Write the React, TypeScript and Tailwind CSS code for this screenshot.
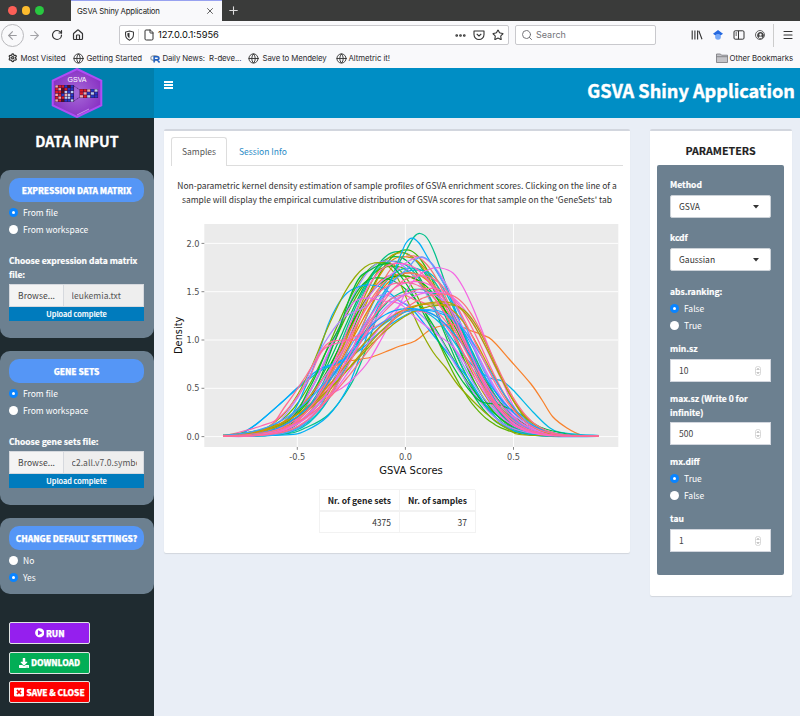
import React from "react";
import {
  ArrowLeft,
  ArrowRight,
  RotateCw,
  House,
  File,
  Search,
  Star,
  Ellipsis,
  Globe,
  Settings,
  Menu,
  X,
  Plus,
} from "lucide-react";
import { FaPlayCircle, FaDownload, FaWindowClose, FaUserCircle } from "react-icons/fa";

type Pt = [number, number];

/* ---------- density plot ---------- */

const PX = (v: number) => 405.4 + v * 216.2;
const PY = (d: number) => 436.6 - d * 96.6;

// Curves with an individual shape, as plot coordinates.
const traced: { c: string; p: Pt[] }[] = [
  { c: "#F8812B", p: [[223, 436.5], [250, 434], [275, 427], [295, 412], [310, 396], [325, 376], [338, 364], [352, 360.5], [370, 357.5], [385, 352], [400, 346], [415, 341], [430, 330], [445, 325], [457, 325], [469, 330], [480, 334], [492, 340], [510, 360], [531, 384], [542, 400], [553, 417], [567, 428], [580, 434.5], [599, 436.4]] },
  { c: "#00B8E5", p: [[223, 436.4], [240, 433.5], [255, 425], [280, 404], [297, 389], [320, 371], [340, 362], [360, 348], [380, 327], [395, 317], [408, 311], [420, 310], [440, 323], [460, 350], [475, 368], [490, 378], [502, 381], [513, 390], [533, 412], [550, 428], [565, 433], [599, 435.6]] },
  { c: "#00A9FF", p: [[223, 436.4], [241, 434], [258, 423], [282, 402], [297, 388], [318, 370], [338, 362], [360, 350], [380, 332], [397, 320], [415, 311], [432, 311], [450, 318], [465, 334], [480, 360], [495, 390], [515, 418], [540, 433], [599, 436.5]] },
  { c: "#00A9FF", p: [[223, 436.4], [265, 434], [290, 417], [305, 388], [317, 358], [328, 325], [337, 306], [347, 293], [358, 287], [369, 285], [383, 288], [398, 300], [412, 309], [430, 331], [450, 356], [470, 381], [490, 411], [510, 429], [540, 436], [599, 436.5]] },
  { c: "#93AA00", p: [[223, 436.4], [258, 432], [282, 416], [298, 394], [312, 366], [325, 334], [335, 312], [345, 292], [355, 277], [365, 267], [374, 263], [385, 264], [397, 277], [408, 302], [420, 329], [433, 352], [446, 368], [458, 385], [477, 405], [493, 419], [510, 430], [525, 435], [599, 436.5]] },
  { c: "#00C08B", p: [[223, 436.5], [285, 434], [305, 428], [328, 415], [350, 386], [365, 352], [380, 307], [394, 273], [407, 249], [414, 237], [420, 233.5], [427, 238], [435, 254], [447, 288], [459, 320], [475, 367], [490, 398], [510, 423], [540, 434], [599, 436.5]] },
  { c: "#00B0F6", p: [[223, 436.5], [285, 435], [305, 431], [328, 416], [347, 389], [360, 356], [374, 316], [388, 288], [399, 259], [406, 243], [412, 238], [419, 243], [428, 258], [445, 286], [460, 322], [480, 372], [500, 407], [520, 426], [550, 434], [599, 436.5]] },
  { c: "#F564E3", p: [[223, 436.5], [265, 433], [298, 416], [322, 399], [342, 388], [354, 378], [368, 362], [382, 338], [395, 314], [407, 290], [418, 276], [430, 269], [441, 268], [453, 273], [463, 287], [473, 308], [487, 343], [500, 375], [513, 405], [527, 423], [550, 434], [599, 436.4]] },
  { c: "#AE87FF", p: [[223, 436.4], [265, 433], [295, 402], [312, 367], [325, 342], [342, 319], [354, 312], [365, 307], [376, 297], [386, 295], [398, 300], [414, 309], [435, 330], [460, 372], [490, 413], [525, 432], [599, 436.5]] },
  { c: "#E76BF3", p: [[223, 436.4], [278, 429], [306, 398], [327, 355], [341, 323], [354, 302], [368, 298], [383, 301], [400, 304], [417, 319], [435, 333], [455, 349], [480, 386], [505, 420], [540, 434], [599, 436.4]] },
  { c: "#DB72FB", p: [[223, 436.5], [280, 431], [302, 413], [323, 379], [344, 348], [361, 309], [378, 285], [393, 273], [407, 262], [419, 257], [430, 262], [446, 284], [461, 315], [479, 357], [500, 398], [525, 426], [560, 435], [599, 436.4]] },
  { c: "#619CFF", p: [[223, 436.4], [285, 433], [315, 413], [334, 378], [350, 347], [374, 310], [391, 284], [407, 269], [415, 260], [423, 257], [433, 265], [445, 286], [465, 325], [480, 363], [500, 399], [520, 424], [560, 434], [599, 436.4]] },
  { c: "#00BA38", p: [[223, 436.4], [285, 423], [310, 387], [327, 350], [340, 326], [350, 297], [360, 277], [372, 269], [380, 265], [391, 265], [405, 282], [421, 309], [443, 349], [463, 382], [480, 401], [500, 405], [520, 414], [540, 427], [570, 434.5], [599, 436.4]] },
  { c: "#FF64B0", p: [[223, 436.4], [261, 426], [281, 416], [306, 384], [323, 350], [345, 341], [365, 332], [383, 322], [401, 311], [423, 312], [440, 319], [460, 347], [480, 383], [500, 411], [530, 431], [599, 436.5]] },
  { c: "#FF6C91", p: [[223, 436.4], [265, 430], [286, 405], [306, 376], [326, 345], [343, 340], [357, 339], [372, 318], [388, 301], [403, 295], [415, 300], [430, 306], [447, 323], [465, 356], [490, 397], [517, 427], [550, 434], [599, 436.5]] },
];

// Bell-shaped curves: colour, mode, height, left spread, right spread, tail power.
const bells: [string, number, number, number, number, number][] = [
  ["#00BF7D", -0.035, 1.91, 0.215, 0.235, 2.2],
  ["#00BC59", -0.045, 1.86, 0.235, 0.215, 2.1],
  ["#39B600", 0.005, 1.93, 0.235, 0.2, 2.0],
  ["#B79F00", -0.02, 1.9, 0.225, 0.23, 2.1],
  ["#D39200", -0.01, 1.86, 0.215, 0.25, 2.2],
  ["#53B400", -0.06, 1.76, 0.25, 0.25, 2.3],
  ["#5EB300", -0.1, 1.8, 0.225, 0.23, 2.1],
  ["#00C19F", -0.055, 1.81, 0.22, 0.24, 2.2],
  ["#00BFC4", 0.025, 1.74, 0.24, 0.23, 2.4],
  ["#00BDD0", 0.055, 1.72, 0.26, 0.22, 2.4],
  ["#9590FF", -0.085, 1.815, 0.225, 0.27, 2.2],
  ["#F8766D", 0.025, 1.87, 0.225, 0.22, 2.1],
  ["#E58700", 0.02, 1.69, 0.26, 0.235, 2.2],
  ["#E88526", -0.04, 1.67, 0.235, 0.29, 2.3],
  ["#F8766D", 0.01, 1.69, 0.26, 0.265, 2.4],
  ["#00BA38", -0.13, 1.64, 0.195, 0.3, 2.3],
  ["#0CB702", -0.02, 1.66, 0.265, 0.28, 2.3],
  ["#00C094", 0.06, 1.52, 0.29, 0.24, 2.4],
  ["#FF61C3", -0.035, 1.79, 0.235, 0.28, 2.3],
  ["#FF67A4", 0.12, 1.53, 0.34, 0.23, 2.4],
  ["#ED68ED", 0.14, 1.49, 0.33, 0.235, 2.4],
  ["#C77CFF", 0.07, 1.49, 0.3, 0.25, 2.4],
  ["#B79F00", 0.17, 1.39, 0.38, 0.22, 2.4],
  ["#A3A500", 0.2, 1.36, 0.41, 0.2, 2.4],
  ["#CD9600", 0.13, 1.37, 0.37, 0.23, 2.4],
  ["#35A2FF", 0.1, 1.31, 0.38, 0.26, 2.5],
  ["#00A5FF", 0.02, 1.32, 0.3, 0.29, 2.4],
  ["#FD61D1", 0.05, 1.6, 0.28, 0.23, 2.4],
  ["#FF68A1", -0.01, 1.59, 0.26, 0.27, 2.4],
  ["#FC717F", 0.18, 1.47, 0.35, 0.21, 2.3],
  ["#FF6A98", 0.07, 1.66, 0.27, 0.245, 2.3],
];

function smooth(p: Pt[]): string {
  let d = `M${p[0][0]} ${p[0][1]}`;
  for (let i = 0; i < p.length - 1; i++) {
    const a = p[Math.max(0, i - 1)];
    const b = p[i];
    const c = p[i + 1];
    const e = p[Math.min(p.length - 1, i + 2)];
    d += `C${(b[0] + (c[0] - a[0]) / 6).toFixed(1)} ${(b[1] + (c[1] - a[1]) / 6).toFixed(1)} ${(c[0] - (e[0] - b[0]) / 6).toFixed(1)} ${(c[1] - (e[1] - b[1]) / 6).toFixed(1)} ${c[0]} ${c[1]}`;
  }
  return d;
}

function bell([, m, h, l, r, k]: (typeof bells)[number]): string {
  const p: Pt[] = [];
  for (let x = 223; x <= 599; x += 4) {
    const v = (x - 405.4) / 216.2;
    const t = Math.abs(v - m) / (v < m ? l : r);
    p.push([x, +PY(h * Math.exp(-0.5 * Math.pow(t, k)) + 0.004).toFixed(2)]);
  }
  return smooth(p);
}

function DensityPlot() {
  return (
    <svg viewBox="171 218 452 262" className="block h-[262px] w-[452px]">
      <rect x="204.3" y="224" width="414" height="223" fill="#EBEBEB" />
      {[0, 0.5, 1, 1.5, 2].map((v) => (
        <g key={v}>
          <line x1="204.3" x2="618.3" y1={PY(v)} y2={PY(v)} stroke="#fff" strokeWidth="0.9" />
          <line x1="201.5" x2="204.3" y1={PY(v)} y2={PY(v)} stroke="#555" strokeWidth="0.7" />
          <text x="199.6" y={PY(v) + 3.1} textAnchor="end" fontSize="8.2" fill="#4d4d4d" fontFamily="DejaVu Sans">
            {v.toFixed(1)}
          </text>
        </g>
      ))}
      {[-0.5, 0, 0.5].map((v) => (
        <g key={v}>
          <line y1="224" y2="447" x1={PX(v)} x2={PX(v)} stroke="#fff" strokeWidth="0.9" />
          <line y1="447" y2="449.8" x1={PX(v)} x2={PX(v)} stroke="#555" strokeWidth="0.7" />
          <text x={PX(v)} y="459.5" textAnchor="middle" fontSize="8.2" fill="#4d4d4d" fontFamily="DejaVu Sans">
            {v.toFixed(1)}
          </text>
        </g>
      ))}
      <g fill="none" strokeWidth="1.25" strokeLinejoin="round">
        {bells.slice(0, 18).map((b, i) => (
          <path key={i} d={bell(b)} stroke={b[0]} />
        ))}
        {traced.map((t, i) => (
          <path key={i} d={smooth(t.p)} stroke={t.c} />
        ))}
        {bells.slice(18).map((b, i) => (
          <path key={i} d={bell(b)} stroke={b[0]} />
        ))}
      </g>
      <text x="411" y="473.6" textAnchor="middle" fontSize="10" fill="#111" fontFamily="DejaVu Sans">
        GSVA Scores
      </text>
      <text transform="translate(182 335.3) rotate(-90)" textAnchor="middle" fontSize="9.8" fill="#111" fontFamily="DejaVu Sans">
        Density
      </text>
    </svg>
  );
}

/* ---------- logo ---------- */

const R = "#e01b24";
const B = "#2438c8";
const L = "#b9cdf0";
const P = "#f3a9a9";
const K = "#5a1020";
const leftCells = [
  [P, R, R, B, K, B],
  [R, P, K, R, B, B],
  [R, R, K, L, B, L],
  [P, R, B, P, L, B],
  [R, P, R, L, L, B],
  [P, R, K, B, B, L],
];
const rightCells = [
  [R, R, P, B, L],
  [R, P, B, L, B],
  [P, R, L, B, B],
];

function Logo() {
  return (
    <svg viewBox="0 0 52 50" className="h-[50px] w-[52px]">
      <defs>
        <radialGradient id="hex">
          <stop offset="0" stopColor="#a668d8" />
          <stop offset="1" stopColor="#8a35c4" />
        </radialGradient>
      </defs>
      <path d="M26 1L50.3 12.6V37.4L26 49L1.7 37.4V12.6Z" fill="url(#hex)" stroke="#b04df5" strokeWidth="2" />
      <text x="26" y="13.9" textAnchor="middle" fontSize="7" fill="#fff" fontFamily="Liberation Sans">
        GSVA
      </text>
      <rect x="4" y="17" width="19" height="17" fill="#33104c" />
      {leftCells.map((r, i) => r.map((c, j) => <rect key={`${i}-${j}`} x={4.3 + j * 3.1} y={17.3 + i * 2.8} width="2.6" height="2.3" fill={c} />))}
      <path d="M23 18L29 22M23 33L29 29" stroke="#33104c" strokeWidth="0.6" strokeDasharray="1.2 .6" />
      <rect x="28.6" y="21" width="18.5" height="9" fill="#33104c" />
      {rightCells.map((r, i) => r.map((c, j) => <rect key={`${i}-${j}`} x={28.9 + j * 3.65} y={21.3 + i * 2.95} width="3.1" height="2.4" fill={c} />))}
      <path d="M26 47L38 41" stroke="#cf9cf2" strokeWidth="0.9" />
    </svg>
  );
}

/* ---------- browser ---------- */

const bm = "text-[7.8px] leading-[10px] text-[#2b2b2f] whitespace-nowrap";

function Browser() {
  return (
    <div className="h-[68px] bg-[#f9f9fb] font-['Inter',sans-serif]">
      <div className="flex h-[21px] bg-[#3a3b3a]">
        <div className="flex w-[71px] items-center gap-[5px] pl-2">
          <i className="size-[8.5px] rounded-full bg-[#fc5f57]" />
          <i className="size-[8.5px] rounded-full bg-[#fdbc2e]" />
          <i className="size-[8.5px] rounded-full bg-[#28c840]" />
        </div>
        <div className="flex w-[151px] items-center justify-between border-t border-[#98a2f0] bg-[#f9f9fb] pl-1.5 pr-[7px]">
          <span className="text-[7.8px] leading-[12px] tracking-[-0.2px] text-[#1c1c22]">GSVA Shiny Application</span>
          <X className="size-[10px] text-[#444]" strokeWidth={2} />
        </div>
        <div className="flex items-center pl-[5px]">
          <Plus className="size-[13px] text-[#ddd]" strokeWidth={2} />
        </div>
      </div>
      <div className="flex h-[28px] items-center">
        <div className="flex w-[119px] items-center">
          <span className="ml-[1px] flex size-[23px] items-center justify-center rounded-full border border-[#b9b9bd]">
            <ArrowLeft className="size-[13px] text-[#9a9a9e]" />
          </span>
          <ArrowRight className="ml-[4px] size-[13px] text-[#a5a5a9]" />
          <RotateCw className="ml-[10px] size-[12px] text-[#333]" strokeWidth={2.4} />
          <House className="ml-[9px] size-[12px] text-[#333]" strokeWidth={2.4} />
        </div>
        <div className="flex h-[20px] w-[390px] items-center rounded-[2px] border border-[#c9c9cd] bg-white pl-[4px] pr-[4px]">
          <svg viewBox="0 0 12 12" className="size-[11px]" fill="none" stroke="#333" strokeWidth="1.1">
            <path d="M6 1L10.3 2.2V5C10.3 8.4 8.4 10.2 6 11.1C3.6 10.2 1.7 8.4 1.7 5V2.2Z" />
            <path d="M6 3V9C4.500 8.300 3.700 7 3.700 5V3.600Z" fill="#333" stroke="none" />
          </svg>
          <span className="ml-[3px] h-[13px] w-px bg-[#ddd]" />
          <File className="ml-[4px] size-[12px] text-[#333]" strokeWidth={2} />
          <span className="ml-[3px] flex-1 text-[9.3px] leading-[12px] text-[#0c0c0d]">127.0.0.1:5956</span>
          <Ellipsis className="size-[13px] text-[#333]" strokeWidth={3} />
          <svg viewBox="0 0 12 12" className="ml-[6px] size-[12px]" fill="none" stroke="#333" strokeWidth="1.1" strokeLinejoin="round">
            <path d="M1 2H11V5.500A5 5 0 0 1 1 5.500Z" />
            <path d="M3.700 4.800L6 7L8.300 4.800" />
          </svg>
          <Star className="ml-[7px] size-[12px] text-[#333]" strokeWidth={2.2} />
        </div>
        <div className="ml-[6px] flex h-[20px] w-[141px] items-center rounded-[2px] border border-[#c9c9cd] bg-white pl-[5px]">
          <Search className="size-[12px] text-[#707074]" strokeWidth={1.9} />
          <span className="ml-[3px] text-[9px] leading-[12px] text-[#737378]">Search</span>
        </div>
        <div className="ml-[35px] flex items-center">
          <svg viewBox="0 0 12 12" className="size-[12px]" fill="none" stroke="#333" strokeWidth="1.1">
            <path d="M1.200 1.500V10.500M3.900 1.500V10.500M6.600 1.500V10.500M7.800 1.800L11 10.300" />
          </svg>
          <svg viewBox="0 0 12 12" className="ml-[9px] size-[12px]">
            <circle cx="6" cy="7.800" r="2.900" fill="#76a9f8" />
            <path d="M6 1L11 4.800L8.600 6.600A3 3 0 0 0 3.400 6.600L1 4.800Z" fill="#2569e0" />
          </svg>
          <svg viewBox="0 0 12 12" className="ml-[9px] size-[12px]" fill="none" stroke="#333" strokeWidth="1">
            <rect x="1" y="1.800" width="10" height="8.400" rx="1.200" />
            <path d="M5.500 1.800V10.200M2.500 4H4M2.500 6H4" />
          </svg>
          <span className="ml-[10px] flex size-[10px] items-center justify-center rounded-full border border-[#666]">
            <FaUserCircle className="size-[7px] text-[#444]" />
          </span>
          <span className="ml-[8px] h-[23px] w-px bg-[#ccc]" />
          <Menu className="ml-[8px] size-[12px] text-[#333]" strokeWidth={2.2} />
        </div>
      </div>
      <div className="flex h-[18px] items-center">
        <Settings className="ml-[8px] size-[9.5px] text-[#333]" strokeWidth={3} />
        <span className={`${bm} ml-[3px] w-[49px] tracking-[-0.05px]`}>Most Visited</span>
        <Globe className="ml-[3px] size-[11px] text-[#333]" strokeWidth={2} />
        <span className={`${bm} ml-[3px] w-[60px]`}>Getting Started</span>
        <svg viewBox="0 0 12 10" className="ml-[3px] h-[9px] w-[11px]">
          <ellipse cx="5" cy="4.500" rx="4.200" ry="2.800" fill="none" stroke="#9aa0a8" strokeWidth="1.4" />
          <path d="M4.500 9.500V3H8.200A1.700 1.700 0 0 1 8.200 6.400H5M8 6.600L10.500 9.500" fill="none" stroke="#1f5fc0" strokeWidth="1.7" />
        </svg>
        <span className={`${bm} ml-[2px] w-[77px] tracking-[-0.1px]`}>Daily News:&nbsp; R-deve...</span>
        <Globe className="ml-[8px] size-[11px] text-[#333]" strokeWidth={2} />
        <span className={`${bm} ml-[4px] w-[65px] tracking-[-0.1px]`}>Save to Mendeley</span>
        <Globe className="ml-[8px] size-[11px] text-[#333]" strokeWidth={2} />
        <span className={`${bm} ml-[2px] tracking-[-0.05px]`}>Altmetric it!</span>
        <svg viewBox="0 0 12 10" className="ml-auto h-[10px] w-[12px]" fill="#c4c4c8" stroke="#77777b" strokeWidth=".8">
          <path d="M.5 9.500V1H4.500L5.500 2.200H11.500V9.500Z" />
          <path d="M.5 3.700H11.500" />
        </svg>
        <span className={`${bm} ml-[2px] mr-[7px] tracking-[-0.05px]`}>Other Bookmarks</span>
      </div>
    </div>
  );
}

/* ---------- form pieces ---------- */

function Radio({ on, label }: { on?: boolean; label: string }) {
  return (
    <div className="flex h-[17px] items-center gap-[5px] text-[8.5px] leading-[13px] text-white">
      <span className={`flex size-[9px] items-center justify-center rounded-full ${on ? "bg-[#0a84ff]" : "bg-white"}`}>
        {on && <i className="size-[3px] rounded-full bg-white" />}
      </span>
      {label}
    </div>
  );
}

function Pill({ children }: { children: string }) {
  return (
    <div className="flex h-[24px] items-center justify-center whitespace-nowrap rounded-[10px] bg-[#5596f6] text-[8.4px] font-black leading-[13px] tracking-[-0.07px] text-white [-webkit-text-stroke:0.25px_white]">
      {children}
    </div>
  );
}

function FileInput({ name }: { name: string }) {
  return (
    <>
      <div className="flex h-[23px] border border-[#d6d9de] bg-[#eee] text-[8.5px] leading-[21px] text-[#444]">
        <span className="w-[54px] border-r border-[#d6d9de] bg-[#f4f4f4] pl-[8px] tracking-[0.06px]">Browse...</span>
        <input readOnly value={name} className="ml-[7.500px] h-[21px] w-[65px] bg-transparent p-0 tracking-[0.06px] text-[#555] outline-none" />
      </div>
      <div className="h-[14px] bg-[#007bbd] text-center text-[7.4px] font-medium leading-[13px] text-white [-webkit-text-stroke:0.15px_white]">
        Upload complete
      </div>
    </>
  );
}

function Action({ color, icon, label }: { color: string; icon: React.ReactNode; label: string }) {
  return (
    <div className={`flex h-[22px] w-[81px] items-center justify-center gap-[2px] rounded-[2px] border border-[#dfe4e2] text-[8.4px] font-black leading-[13px] tracking-[-0.08px] text-white [-webkit-text-stroke:0.25px_white] ${color}`}>
      {icon}
      {label}
    </div>
  );
}

const block = "rounded-[10px] bg-[#6c8090] px-[9px] pt-[8px] pr-[10px]";
const lbl = "text-[8.5px] font-bold leading-[13.5px] text-white [-webkit-text-stroke:0.2px_white]";

function Sidebar() {
  return (
    <aside className="h-[598px] w-[154px] bg-[#1f2b30]">
      <h2 className="h-[52px] pt-[10px] text-center text-[14.3px] font-bold leading-[26px] text-white [-webkit-text-stroke:0.3px_white]">DATA INPUT</h2>
      <div className={`${block} h-[168px]`}>
        <Pill>EXPRESSION DATA MATRIX</Pill>
        <div className="pt-[2px]">
          <Radio on label="From file" />
          <Radio label="From workspace" />
        </div>
        <div className={`${lbl} mt-[16px] h-[30px]`}>
          Choose expression data matrix
          <br />
          file:
        </div>
        <FileInput name="leukemia.txt" />
      </div>
      <div className={`${block} mt-[13px] h-[154px]`}>
        <Pill>GENE SETS</Pill>
        <div className="pt-[2px]">
          <Radio on label="From file" />
          <Radio label="From workspace" />
        </div>
        <div className={`${lbl} mt-[16px] h-[16px]`}>Choose gene sets file:</div>
        <FileInput name="c2.all.v7.0.symbols.gmt" />
      </div>
      <div className={`${block} mt-[13px] h-[76px]`}>
        <Pill>CHANGE DEFAULT SETTINGS?</Pill>
        <div className="pt-[2px]">
          <Radio label="No" />
          <Radio on label="Yes" />
        </div>
      </div>
      <div className="flex flex-col gap-[7.5px] pl-[9px] pt-[28px]">
        <Action color="bg-[#951fee]" icon={<FaPlayCircle className="size-[9.5px]" />} label="RUN" />
        <Action color="bg-[#02ae56]" icon={<FaDownload className="size-[10px]" />} label="DOWNLOAD" />
        <Action color="bg-[#fe0000]" icon={<FaWindowClose className="size-[10px]" />} label="SAVE & CLOSE" />
      </div>
    </aside>
  );
}

function Select({ value }: { value: string }) {
  return (
    <div className="flex h-[23px] items-center justify-between rounded-[2px] border border-[#ccd2d8] bg-white pl-[8px] pr-[11px] text-[8.5px] leading-[13px] text-[#333]">
      {value}
      <svg viewBox="0 0 6 4" className="h-[4px] w-[6px]">
        <path d="M0 0H6L3 3.600Z" fill="#333" />
      </svg>
    </div>
  );
}

function NumberInput({ value }: { value: string }) {
  return (
    <div className="flex h-[23px] items-center justify-between border border-[#d2d6de] bg-white pl-[8px] pr-[9px] text-[8.5px] leading-[13px] text-[#444]">
      {value}
      <svg viewBox="0 0 6 10" className="h-[10px] w-[6px]" fill="none">
        <rect x=".5" y=".5" width="5" height="9" rx="2" stroke="#cfcfcf" strokeWidth=".8" />
        <path d="M2 3.700L3 2.600L4 3.700M2 6.300L3 7.400L4 6.300" stroke="#666" strokeWidth=".8" />
      </svg>
    </div>
  );
}

function Parameters() {
  return (
    <section className="h-[467px] w-[142px] rounded-[2px] border-t-2 border-[#d2d6de] bg-white pl-[7px] pr-[8px] shadow-[0_1px_1px_rgba(0,0,0,0.1)]">
      <h3 className="h-[34px] pt-[12px] text-center text-[10.7px] font-bold leading-[16px] text-[#222] [-webkit-text-stroke:0.15px_#222]">PARAMETERS</h3>
      <div className="h-[410px] rounded-[2px] bg-[#6c8090] px-[13px] pt-[13px]">
        <div className={`${lbl} h-[17px]`}>Method</div>
        <Select value="GSVA" />
        <div className={`${lbl} mt-[13px] h-[17px]`}>kcdf</div>
        <Select value="Gaussian" />
        <div className={`${lbl} mt-[14px] h-[15px]`}>abs.ranking:</div>
        <Radio on label="False" />
        <Radio label="True" />
        <div className={`${lbl} mt-[8px] h-[17px]`}>min.sz</div>
        <NumberInput value="10" />
        <div className={`${lbl} mt-[10px] h-[30px]`}>
          max.sz (Write 0 for
          <br />
          infinite)
        </div>
        <NumberInput value="500" />
        <div className={`${lbl} mt-[10px] h-[15px]`}>mx.diff</div>
        <Radio on label="True" />
        <Radio label="False" />
        <div className={`${lbl} mt-[8px] h-[17px]`}>tau</div>
        <NumberInput value="1" />
      </div>
    </section>
  );
}

function SamplesBox() {
  return (
    <section className="h-[424px] w-[466px] rounded-[2px] border-t-2 border-[#d2d6de] bg-white px-[7px] pt-[6px] shadow-[0_1px_1px_rgba(0,0,0,0.1)]">
      <div className="flex h-[29px] text-[8.5px] leading-[28px]">
        <span className="w-[56px] rounded-t-[3px] border border-b-0 border-[#ddd] text-center leading-[27px] text-[#555]">Samples</span>
        <span className="flex-1 border-b border-[#ddd] pl-[12px] text-[#2a8bc6]">Session Info</span>
      </div>
      <p className="h-[52px] whitespace-nowrap pt-[13px] text-center text-[8.47px] leading-[13.5px] text-[#333]">
        Non-parametric kernel density estimation of sample profiles of GSVA enrichment scores. Clicking on the line of a
        <br />
        sample will display the empirical cumulative distribution of GSVA scores for that sample on the 'GeneSets' tab
      </p>
      <DensityPlot />
      <div className="ml-[148px] mt-[9px] grid w-[156px] grid-cols-[80px_76px] border-l border-t border-[#f2f2f2] text-right text-[8.5px] leading-[21px] text-[#333]">
        <b className="h-[22px] border-b-2 border-r border-[#f2f2f2] pr-[8px] text-[#222]">Nr. of gene sets</b>
        <b className="h-[22px] border-b-2 border-r border-[#f2f2f2] pr-[8px] text-[#222]">Nr. of samples</b>
        <span className="h-[21px] border-b border-r border-[#f2f2f2] pr-[8px]">4375</span>
        <span className="h-[21px] border-b border-r border-[#f2f2f2] pr-[8px]">37</span>
      </div>
    </section>
  );
}

export default function App() {
  return (
    <div className="h-[716px] w-[800px] overflow-hidden bg-[#e9eef6] font-['Noto_Sans_CJK_SC',sans-serif]">
      <Browser />
      <header className="flex h-[50px] text-white">
        <div className="flex w-[154px] justify-center bg-[#007fad]">
          <Logo />
        </div>
        <div className="flex flex-1 justify-between bg-[#008ec5] pl-[10px] pr-[5px]">
          <div className="mt-[13px] flex flex-col gap-[1.5px]">
            <i className="h-[1.5px] w-[9px] bg-white" />
            <i className="h-[1.5px] w-[9px] bg-white" />
            <i className="h-[1.5px] w-[9px] bg-white" />
          </div>
          <h1 className="pt-[8px] text-[18.15px] font-bold leading-[28px] [-webkit-text-stroke:0.4px_white]">GSVA Shiny Application</h1>
        </div>
      </header>
      <div className="flex">
        <Sidebar />
        <main className="flex flex-1 items-start gap-[20px] pl-[10px] pt-[11px]">
          <SamplesBox />
          <Parameters />
        </main>
      </div>
    </div>
  );
}
